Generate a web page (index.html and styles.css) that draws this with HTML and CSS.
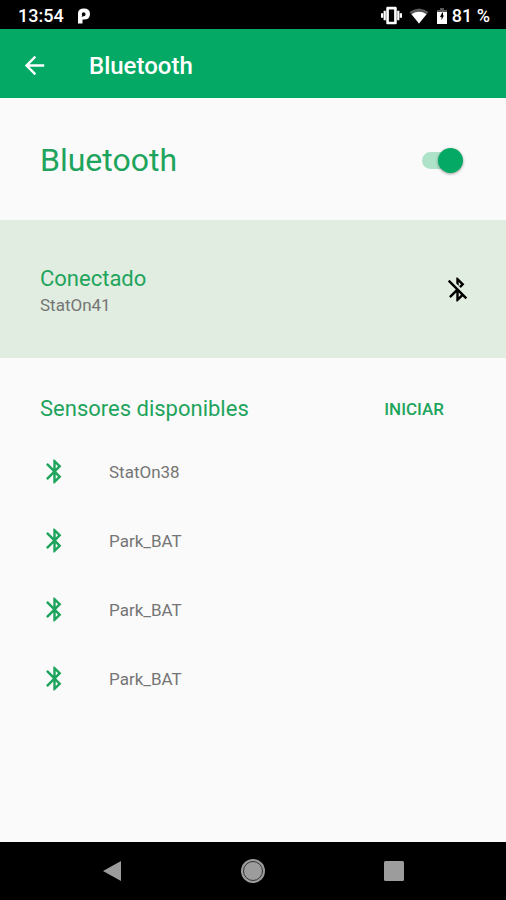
FILE: index.html
```html
<!DOCTYPE html>
<html lang="es">
<head>
<meta charset="utf-8">
<meta name="viewport" content="width=device-width, initial-scale=1">
<title>Bluetooth</title>
<link rel="stylesheet" href="styles.css">
</head>
<body>
<svg class="defs" aria-hidden="true">
  <symbol id="bt" viewBox="0 0 24 24"><path d="M17.71 7.71L12 2h-1v7.59L6.41 5 5 6.41 10.59 12 5 17.59 6.41 19 11 14.41V22h1l5.71-5.71-4.3-4.29 4.3-4.29zM13 5.83l1.88 1.88L13 9.59V5.83zm1.88 10.46L13 18.17v-3.76l1.88 1.88z"/></symbol>
</svg>
<div class="status">
  <span class="time">13:54</span>
  <svg class="parking" viewBox="0 0 14 16" aria-hidden="true"><path fill-rule="evenodd" d="M1 5.5Q1 0.5 7 0.5Q13 0.5 13 6Q13 11.5 7 11.5H5.5V15.5H1ZM6.8 4.2A2 2 0 0 0 5.2 7.4L4.6 9L6.4 8.2A2 2 0 1 0 6.8 4.2Z"/></svg>
  <span class="spacer"></span>
  <svg class="vibrate" viewBox="0 0 24 24" aria-hidden="true"><path d="M0 14.500h2.500v-5H0v5zm3 3h2.500V6.500H3v11zm18.500-8v5H24v-5h-2.500zm-3 8H21V6.500h-2.500v11zM16.500 2h-9C6.670 2 6 2.670 6 3.500v17c0 .830.670 1.500 1.500 1.500h9c.830 0 1.500-.670 1.500-1.500v-17c0-.830-.670-1.500-1.500-1.500zM15 19H9V5h6v14z"/></svg>
  <svg class="wifi" viewBox="0 0 20 16" aria-hidden="true"><path class="dim" d="M0.5 4Q10-3 19.500 4L10 15.500Z"/><path d="M2.500 6.200Q10 1.500 17.500 6.200L10 15.500Z"/></svg>
  <svg class="battery" viewBox="0 0 12 16" aria-hidden="true"><path class="dim" d="M4 0h4v2h3v3H1V2h3z"/><path fill-rule="evenodd" d="M1 4h10v12H1zM7 3L4 9H5.500V12L8 7.500H7z"/></svg>
  <span class="charge">81 %</span>
</div>
<header class="appbar">
  <button class="back" type="button" aria-label="Atrás"><svg viewBox="0 0 24 24" aria-hidden="true"><path d="M20 11H7.830l5.590-5.590L12 4l-8 8 8 8 1.410-1.410L7.830 13H20v-2z"/></svg></button>
  <h1>Bluetooth</h1>
</header>
<main>
  <section class="power">
    <label for="power">Bluetooth</label>
    <input id="power" class="switch" type="checkbox" role="switch" checked>
  </section>
  <section class="connected">
    <div class="device">
      <h2>Conectado</h2>
      <p>StatOn41</p>
    </div>
    <button class="disconnect" type="button" aria-label="Desconectar"><svg viewBox="0 0 24 24" aria-hidden="true"><path d="M13 5.830l1.880 1.880-1.600 1.600 1.410 1.410 3.020-3.020L12 2h-1v5.030l2 2v-3.200zM5.410 4L4 5.410 10.590 12 5 17.590 6.410 19 11 14.410V22h1l4.290-4.290 2.300 2.290L20 18.590 5.410 4zM13 18.170v-3.760l1.880 1.880L13 18.170z"/></svg></button>
  </section>
  <section class="available">
    <div class="heading">
      <h2>Sensores disponibles</h2>
      <button class="start" type="button">INICIAR</button>
    </div>
    <ul>
      <li><svg aria-hidden="true"><use href="#bt"/></svg>StatOn38</li>
      <li><svg aria-hidden="true"><use href="#bt"/></svg>Park_BAT</li>
      <li><svg aria-hidden="true"><use href="#bt"/></svg>Park_BAT</li>
      <li><svg aria-hidden="true"><use href="#bt"/></svg>Park_BAT</li>
    </ul>
  </section>
</main>
<nav class="navbar">
  <button type="button" aria-label="Volver"><svg viewBox="0 0 24 24" aria-hidden="true"><path d="M3 12L21 2V22Z"/></svg></button>
  <button type="button" aria-label="Inicio"><svg viewBox="0 0 24 24" aria-hidden="true"><circle cx="12" cy="12" r="12"/><circle class="ring" cx="12" cy="12" r="9.500"/></svg></button>
  <button type="button" aria-label="Recientes"><svg viewBox="0 0 24 24" aria-hidden="true"><rect x="2" y="2" width="20" height="20" rx="1.500"/></svg></button>
</nav>
</body>
</html>
```

FILE: styles.css
```css
* {
  box-sizing: border-box;
}

body {
  margin: 0;
  min-height: 100vh;
  display: flex;
  flex-direction: column;
  background: #fafafa;
  color: #757575;
  font-family: Roboto, "Liberation Sans", sans-serif;
}

h1, h2, p, ul {
  margin: 0;
  padding: 0;
  font-weight: 400;
}

button {
  display: flex;
  padding: 0;
  border: 0;
  background: none;
  color: inherit;
  font: inherit;
}

svg {
  display: block;
  flex: none;
  fill: currentColor;
}

.defs {
  position: absolute;
  width: 0;
  height: 0;
}

.status {
  display: flex;
  align-items: center;
  height: 29px;
  padding: 2px 16px 0 18px;
  background: #000;
  color: #fff;
  font-size: 18px;
  font-weight: 500;
}

.parking {
  width: 14px;
  height: 16px;
  margin-left: 13px;
}

.spacer {
  flex: 1;
}

.vibrate {
  width: 21px;
  height: 21px;
}

.wifi {
  width: 20px;
  height: 16px;
  margin: 0 7px;
}

.battery {
  width: 12px;
  height: 16px;
  margin-right: 4px;
}

.dim {
  opacity: 0.35;
}

.appbar {
  display: flex;
  align-items: center;
  gap: 40px;
  height: 69px;
  padding: 4px 20px 0;
  background: #03a964;
  color: #fff;
}

.back svg,
.disconnect svg,
.available svg {
  width: 29px;
  height: 29px;
}

h1 {
  font-size: 24px;
  font-weight: 500;
}

main {
  flex: 1;
}

.power {
  display: flex;
  align-items: center;
  justify-content: space-between;
  height: 122px;
  padding: 2px 43px 0 40px;
  color: #1ea45c;
  font-size: 32px;
}

.switch {
  appearance: none;
  display: flex;
  align-items: center;
  justify-content: flex-end;
  width: 41px;
  height: 17px;
  margin: 0;
  background: linear-gradient(to right, #aee2c9 32px, transparent 32px);
  border-radius: 9px;
}

.switch::before {
  content: "";
  flex: none;
  width: 25px;
  height: 25px;
  border-radius: 50%;
  background: #03a964;
  box-shadow: 0 1px 3px rgba(0, 0, 0, 0.4);
}

.connected {
  display: flex;
  align-items: center;
  justify-content: space-between;
  height: 138px;
  padding: 0 34px 0 40px;
  background: #e1ede0;
}

.device {
  padding-top: 4px;
}

h2 {
  color: #1ea45c;
  font-size: 22px;
  line-height: 28px;
}

.connected p {
  font-size: 17px;
  line-height: 24px;
}

.disconnect {
  color: #000;
}

.available {
  padding: 37px 62px 0 40px;
}

.heading {
  display: flex;
  align-items: center;
  justify-content: space-between;
  margin-bottom: 14px;
}

.start {
  color: #1ea45c;
  font-size: 17px;
  font-weight: 500;
}

.available li {
  display: flex;
  align-items: center;
  gap: 40px;
  height: 69px;
  font-size: 17px;
}

.available svg {
  color: #1ea45c;
}

.navbar {
  display: flex;
  align-items: center;
  justify-content: space-around;
  height: 58px;
  padding: 0 42px;
  background: #000;
  color: #9c9c9c;
}

.navbar svg {
  width: 24px;
  height: 24px;
}

.ring {
  fill: none;
  stroke: #333;
}
```
